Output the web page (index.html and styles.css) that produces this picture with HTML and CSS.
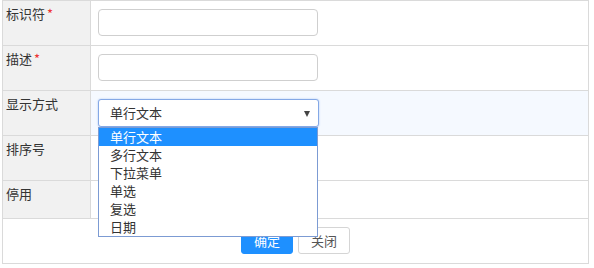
FILE: index.html
```html
<!DOCTYPE html>
<html lang="zh-CN">

<head>
    <meta charset="UTF-8">
    <meta name="viewport" content="width=device-width, initial-scale=1.0">
    <title>字段编辑</title>
    <link rel="stylesheet" href="styles.css">
</head>

<body>
    <div class="wrap">
        <table class="form">
            <tr>
                <td class="lbl">标识符<span class="req">*</span></td>
                <td class="val"><input class="txt" type="text"></td>
            </tr>
            <tr>
                <td class="lbl">描述<span class="req">*</span></td>
                <td class="val"><input class="txt" type="text"></td>
            </tr>
            <tr class="hover">
                <td class="lbl">显示方式</td>
                <td class="val">
                    <div class="sel">
                        <div class="sel-box">单行文本<span class="arrow"></span></div>
                        <ul class="sel-list">
                            <li class="on">单行文本</li>
                            <li>多行文本</li>
                            <li>下拉菜单</li>
                            <li>单选</li>
                            <li>复选</li>
                            <li>日期</li>
                        </ul>
                    </div>
                </td>
            </tr>
            <tr>
                <td class="lbl">排序号</td>
                <td class="val"><input class="txt" type="text"></td>
            </tr>
            <tr class="short">
                <td class="lbl">停用</td>
                <td class="val"></td>
            </tr>
            <tr>
                <td class="btns" colspan="2">
                    <button class="btn ok">确定</button>
                    <button class="btn">关闭</button>
                </td>
            </tr>
        </table>
    </div>
</body>

</html>
```

FILE: styles.css
```css
* {
    margin: 0;
    padding: 0;
    box-sizing: border-box;
}

body {
    font-family: "Noto Sans CJK SC", "Liberation Sans", sans-serif;
    font-size: 13px;
    color: #333;
    background: #fff;
}

.wrap {
    padding-left: 2px;
}

.form {
    width: 587px;
    border-collapse: collapse;
    border: 1px solid #d2d2d2;
}

.form td {
    border: 1px solid #dadada;
    vertical-align: top;
}

.lbl {
    width: 88px;
    background: #f1f1f1;
    padding: 3px 3px;
    line-height: 20px;
}

.req {
    color: #e33;
    margin-left: 2px;
}

.val {
    padding: 8px 7px;
    height: 45px;
}

.hover .val {
    background: #f5f9ff;
}

.short .val {
    height: 38px;
}

.txt {
    display: block;
    width: 220px;
    height: 27px;
    border: 1px solid #cfcfcf;
    border-radius: 4px;
    background: #fff;
    outline: none;
}

.sel {
    position: relative;
    width: 221px;
}

.sel-box {
    height: 28px;
    border: 1px solid #84a8e6;
    border-radius: 3px;
    background: #fff;
    padding: 0 11px;
    line-height: 26px;
    position: relative;
    box-shadow: 0 0 2px #a9c4f0;
}

.arrow {
    position: absolute;
    right: 8px;
    top: 11px;
    border-left: 3px solid transparent;
    border-right: 3px solid transparent;
    border-top: 6px solid #444;
}

.sel-list {
    position: absolute;
    left: 0;
    top: 28px;
    width: 220px;
    list-style: none;
    background: #fff;
    border: 1px solid #7c9bd3;
    z-index: 2;
}

.sel-list li {
    height: 18px;
    line-height: 18px;
    padding-left: 11px;
}

.sel-list li.on {
    background: #1e90ff;
    color: #fff;
}

.btns {
    text-align: center;
    padding: 8px 0;
    height: 45px;
}

.btn {
    width: 52px;
    height: 27px;
    font-family: inherit;
    font-size: 13px;
    color: #555;
    background: #fff;
    border: 1px solid #d5d5d5;
    border-radius: 3px;
    margin: 0 1px;
}

.btn.ok {
    background: #1e90ff;
    border-color: #1e90ff;
    color: #fff;
}
```
